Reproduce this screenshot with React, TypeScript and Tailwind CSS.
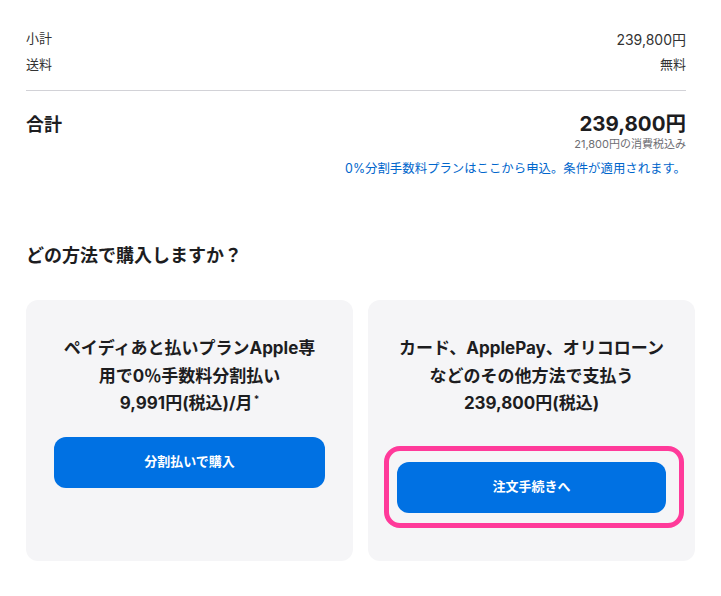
import React from 'react';

const font = { fontFamily: '"Inter", "Noto Sans CJK JP", sans-serif' };

export default function App() {
  return (
    <div className="min-h-screen bg-white text-[#1d1d1f] px-[26px]" style={font}>
      <div className="mr-[9px] pt-[26px]">
        <div className="flex justify-between items-center h-[26px] text-[13px] text-[#333]">
          <span>小計</span>
          <span className="text-[14px]">239,800円</span>
        </div>
        <div className="flex justify-between items-center h-[26px] text-[13px] text-[#333]">
          <span>送料</span>
          <span>無料</span>
        </div>
        <div className="mt-[12px] border-t border-[#d2d2d7]" />

        <div className="flex justify-between mt-[20px]">
          <span className="text-[18px] font-bold leading-[28px]">合計</span>
          <div className="text-right">
            <div className="text-[20.5px] font-bold leading-[26px]">239,800円</div>
            <div className="text-[11px] text-[#6e6e73] leading-[14px]">21,800円の消費税込み</div>
          </div>
        </div>
        <div className="text-right text-[12.4px] text-[#0066cc] leading-[18px] mt-[9px]">
          0%分割手数料プランはここから申込。条件が適用されます。
        </div>
      </div>

      <h2 className="mt-[65px] text-[18px] font-semibold leading-[26px]">どの方法で購入しますか？</h2>

      <div className="mt-[31px] grid grid-cols-2 gap-[15px]">
        <div className="h-[261px] rounded-[12px] bg-[#f5f5f7] px-[28px] pt-[35px]">
          <div className="text-center text-[17px] font-bold leading-[27.5px]">
            <div>ペイディあと払いプランApple専</div>
            <div>用で0％手数料分割払い</div>
            <div className="h-[27.5px]">
              9,991円(税込)/月
              <span className="relative -top-[6px] ml-[1px] text-[10px] font-bold leading-none">*</span>
            </div>
          </div>
          <button className="mt-[19px] w-full h-[51px] rounded-[12px] bg-[#0071e3] text-white text-[13px] font-bold">
            分割払いで購入
          </button>
        </div>

        <div className="h-[261px] rounded-[12px] bg-[#f5f5f7] px-[29px] pt-[35px]">
          <p className="text-center text-[17px] font-bold leading-[27.5px]">
            カード、ApplePay、オリコローン
            <br />
            などのその他方法で支払う
            <br />
            239,800円(税込)
          </p>
          <div className="relative mt-[44px]">
            <button className="w-full h-[51px] rounded-[12px] bg-[#0071e3] text-white text-[13px] font-bold">
              注文手続きへ
            </button>
            <div className="pointer-events-none absolute -left-[13px] -right-[18px] -top-[16px] -bottom-[15px] rounded-[16px] border-[5px] border-[#ff3a9a]" />
          </div>
        </div>
      </div>
    </div>
  );
}
